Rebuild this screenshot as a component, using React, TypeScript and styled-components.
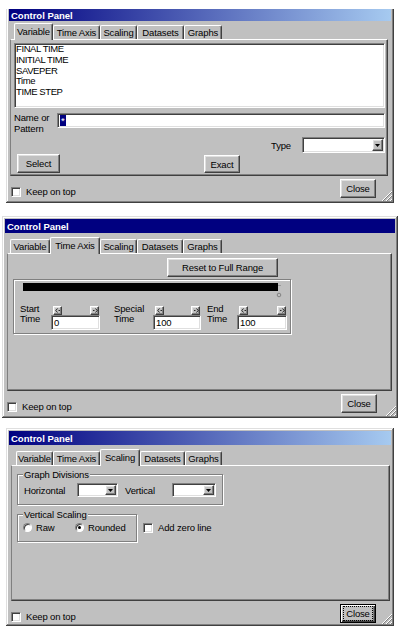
import React from "react";
import styled, { createGlobalStyle, css } from "styled-components";

const GlobalStyle = createGlobalStyle`
  html, body { margin: 0; padding: 0; background: #ffffff; }
  body { font-family: "Liberation Sans", Arial, Helvetica, sans-serif; font-size: 9.5px; letter-spacing: -0.15px; color: #000; }
  *, *::before, *::after { box-sizing: border-box; }
`;

const sunken = css`
  background: #ffffff;
  border: 1px solid;
  border-color: #808080 #ffffff #ffffff #808080;
  box-shadow: inset 1px 1px 0 #404040, inset -1px -1px 0 #dfdfdf;
`;

const raised = css`
  background: #c0c0c0;
  border: 1px solid;
  border-color: #ffffff #404040 #404040 #ffffff;
  box-shadow: inset -1px -1px 0 #808080, inset 1px 1px 0 #dfdfdf;
`;

const Screen = styled.div`
  width: 402px;
  height: 634px;
  overflow: hidden;
  display: flex;
  flex-direction: column;
`;

const Frame = styled.section<{ $left: number; $top: number; $width: number; $height: number; $cropTop?: boolean }>`
  position: relative;
  flex: none;
  margin-left: ${(p) => p.$left}px;
  margin-top: ${(p) => p.$top}px;
  width: ${(p) => p.$width}px;
  height: ${(p) => p.$height}px;
  padding: ${(p) => (p.$cropTop ? "0 3px 3px" : "3px")};
  background: #c0c0c0;
  display: flex;
  flex-direction: column;
  box-shadow: ${(p) =>
    p.$cropTop
      ? "inset -1px -1px 0 #404040, inset 1px 0 0 #dfdfdf, inset -2px -2px 0 #808080, inset 2px 0 0 #ffffff"
      : "inset -1px -1px 0 #404040, inset 1px 1px 0 #dfdfdf, inset -2px -2px 0 #808080, inset 2px 2px 0 #ffffff"};
`;

const TitleBar = styled.div<{ $h: number; $gradient: boolean }>`
  flex: none;
  height: ${(p) => p.$h}px;
  background: ${(p) => (p.$gradient ? "linear-gradient(to right, #000080, #a6caf0)" : "#000080")};
  color: #ffffff;
  font-weight: bold;
  font-size: 9.5px;
  letter-spacing: 0;
  display: flex;
  align-items: center;
  padding-left: 2px;
`;

const TabStrip = styled.div<{ $h: number; $offset: number }>`
  position: relative;
  z-index: 1;
  flex: none;
  height: ${(p) => p.$h}px;
  display: flex;
  align-items: flex-end;
  padding-left: ${(p) => p.$offset}px;
`;

const Tab = styled.div<{ $w: number; $active: boolean }>`
  width: ${(p) => p.$w}px;
  height: ${(p) => (p.$active ? 17 : 14)}px;
  margin-bottom: ${(p) => (p.$active ? -1 : 0)}px;
  background: #c0c0c0;
  border-top: 1px solid #ffffff;
  border-left: 1px solid #ffffff;
  border-right: 1px solid #404040;
  border-radius: 2px 2px 0 0;
  box-shadow: inset -1px 0 0 #808080;
  display: flex;
  justify-content: center;
  align-items: ${(p) => (p.$active ? "flex-start" : "center")};
  padding-top: ${(p) => (p.$active ? 2 : 0)}px;
  line-height: 11px;
  white-space: nowrap;
`;

const TabPage = styled.div<{ $h: number; $ml: number; $mr: number }>`
  flex: none;
  height: ${(p) => p.$h}px;
  margin: 0 ${(p) => p.$mr}px 0 ${(p) => p.$ml}px;
  border-top: 1px solid #ffffff;
  border-left: 1px solid #808080;
  border-right: 1px solid #404040;
  border-bottom: 1px solid #404040;
  box-shadow: inset -1px -1px 0 #808080;
  display: flex;
  flex-direction: column;
`;

const Footer = styled.div<{ $closeRight: number }>`
  flex: 1;
  display: flex;
  justify-content: space-between;
  align-items: flex-start;
  padding-right: ${(p) => p.$closeRight}px;
`;

const CheckLabel = styled.label`
  display: flex;
  align-items: center;
  gap: 5px;
  line-height: 11px;
  white-space: nowrap;
`;

const KeepOnTop = styled(CheckLabel)`
  margin: 10px 0 0 2px;
`;

const CheckBox = styled.span`
  ${sunken};
  flex: none;
  width: 10px;
  height: 10px;
`;

const Button = styled.button<{ $w: number; $h: number; $focused?: boolean }>`
  ${raised};
  flex: none;
  width: ${(p) => p.$w}px;
  height: ${(p) => p.$h}px;
  padding: 0;
  font: inherit;
  letter-spacing: inherit;
  color: #000;
  line-height: 11px;
  display: flex;
  align-items: center;
  justify-content: center;
  white-space: nowrap;
  ${(p) =>
    p.$focused &&
    css`
      border-color: #000;
      box-shadow: inset 1px 1px 0 #ffffff, inset -1px -1px 0 #404040, inset -2px -2px 0 #808080;
    `}
`;

const FocusRing = styled.span`
  border: 1px dotted #000;
  padding: 1px 2px;
`;

const CloseButton = styled(Button)`
  margin-top: 3px;
`;

const GripMark = styled.svg`
  position: absolute;
  right: 2px;
  bottom: 2px;
`;

/* ---------- Variable page ---------- */

const ListBox = styled.div`
  ${sunken};
  flex: none;
  height: 65px;
  margin: 3px 2px 0 3px;
  padding: 0 1px;
  line-height: 10.75px;
  letter-spacing: -0.4px;
`;

const NameRow = styled.div`
  display: flex;
  margin: 4px 2px 0 3px;
`;

const StackLabel = styled.div<{ $w: number; $lh: number }>`
  flex: none;
  width: ${(p) => p.$w}px;
  line-height: ${(p) => p.$lh}px;
  white-space: nowrap;
`;

const PatternField = styled.div`
  ${sunken};
  flex: 1;
  height: 15px;
  margin-top: 1px;
  padding: 0 2px;
  display: flex;
  align-items: center;
`;

const Selection = styled.span`
  background: #000080;
  color: #ffffff;
  line-height: 11px;
  padding: 0 1px;
`;

const TypeRow = styled.div`
  display: flex;
  justify-content: flex-end;
  align-items: center;
  gap: 11px;
  margin: 3px 2px 0 0;
`;

const ComboBox = styled.div<{ $w: number; $h: number }>`
  ${sunken};
  flex: none;
  width: ${(p) => p.$w}px;
  height: ${(p) => p.$h}px;
  padding: 1px;
  display: flex;
  justify-content: flex-end;
`;

const DropButton = styled.span`
  ${raised};
  width: 11px;
  height: 100%;
  display: flex;
  align-items: center;
  justify-content: center;
`;

const ActionRow = styled.div`
  display: flex;
  align-items: flex-start;
  margin: 1px 0 0 6px;
`;

const ExactButton = styled(Button)`
  margin: 1px 0 0 144px;
`;

/* ---------- Time Axis page ---------- */

const ResetButton = styled(Button)`
  margin: 4px 0 0 159px;
`;

const RangeFrame = styled.div`
  flex: none;
  width: 278px;
  height: 55px;
  margin: 2px 0 0 5px;
  border: 1px solid #808080;
  box-shadow: inset 1px 1px 0 #ffffff, 1px 1px 0 #ffffff;
  display: flex;
  flex-direction: column;
`;

const RangeBar = styled.div`
  position: relative;
  flex: none;
  width: 255px;
  height: 8px;
  margin: 3px 0 0 9px;
  background: #000;
`;

const RangeThumb = styled.svg`
  position: absolute;
  left: 253px;
  top: 1px;
`;

const TimeRow = styled.div`
  display: flex;
  margin: 13px 0 0 6px;
`;

const TimeGroup = styled.div<{ $ml: number }>`
  display: flex;
  margin-left: ${(p) => p.$ml}px;
`;

const TimeControls = styled.div<{ $w: number }>`
  width: ${(p) => p.$w}px;
  display: flex;
  flex-direction: column;
`;

const ArrowRow = styled.div`
  display: flex;
  justify-content: space-between;
  height: 9px;
  margin-top: 2px;
  padding: 0 1px 0 2px;
`;

const ArrowButton = styled.span`
  ${raised};
  width: 9px;
  height: 9px;
  display: flex;
  align-items: center;
  justify-content: center;
`;

const TimeField = styled.div`
  ${sunken};
  height: 15px;
  padding: 0 2px;
  display: flex;
  align-items: center;
`;

/* ---------- Scaling page ---------- */

const GroupBox = styled.div<{ $w: number; $mt: number }>`
  position: relative;
  flex: none;
  width: ${(p) => p.$w}px;
  margin-top: ${(p) => p.$mt}px;
  border: 1px solid #808080;
  box-shadow: inset 1px 1px 0 #ffffff, 1px 1px 0 #ffffff;
`;

const GroupLegend = styled.span`
  position: absolute;
  left: 5px;
  top: -6px;
  padding: 0 1px;
  background: #c0c0c0;
  line-height: 11px;
  white-space: nowrap;
`;

const DivisionsRow = styled.div`
  display: flex;
  align-items: center;
  padding: 8px 0 7px 6px;
`;

const InlineLabel = styled.span<{ $w: number; $ml?: number }>`
  flex: none;
  width: ${(p) => p.$w}px;
  margin-left: ${(p) => p.$ml ?? 0}px;
  white-space: nowrap;
`;

const ScalingSection = styled.div`
  display: flex;
  align-items: flex-start;
  margin-left: 5px;
`;

const DivisionsSection = styled.div`
  margin-left: 5px;
`;

const RadioRow = styled.div`
  display: flex;
  height: 11px;
  align-items: center;
  padding: 0 0 0 5px;
  margin: 7px 0 8px;
`;

const RadioItem = styled.label<{ $w?: number }>`
  display: flex;
  align-items: center;
  gap: 4px;
  width: ${(p) => (p.$w ? `${p.$w}px` : "auto")};
  white-space: nowrap;
`;

const Radio = styled.span<{ $checked?: boolean }>`
  flex: none;
  width: 9px;
  height: 9px;
  border-radius: 50%;
  background: #ffffff;
  border: 1px solid;
  border-color: #808080 #ffffff #ffffff #808080;
  box-shadow: inset 1px 1px 0 #404040;
  display: flex;
  align-items: center;
  justify-content: center;
  &::after {
    content: "";
    width: 3px;
    height: 3px;
    border-radius: 50%;
    background: ${(p) => (p.$checked ? "#000" : "transparent")};
  }
`;

const ZeroLine = styled(CheckLabel)`
  margin: 17px 0 0 6px;
`;

/* ---------- pieces ---------- */

const TABS = ["Variable", "Time Axis", "Scaling", "Datasets", "Graphs"];

function DownArrow() {
  return (
    <svg width="5" height="3" viewBox="0 0 5 3">
      <path d="M0 0 H5 L2.5 3 Z" fill="#000" />
    </svg>
  );
}

function Combo({ w, h }: { w: number; h: number }) {
  return (
    <ComboBox $w={w} $h={h}>
      <DropButton>
        <DownArrow />
      </DropButton>
    </ComboBox>
  );
}

function Arrow({ dir }: { dir: "left" | "right" }) {
  return (
    <svg width="6" height="5" viewBox="0 0 6 5">
      {dir === "left" ? (
        <path d="M2.5 0.5 L0.8 2.5 L2.5 4.5 M3.5 2.5 H5" stroke="#000" strokeWidth="0.8" fill="none" />
      ) : (
        <path d="M3.5 0.5 L5.2 2.5 L3.5 4.5 M1 2.5 H2.5" stroke="#000" strokeWidth="0.8" fill="none" />
      )}
    </svg>
  );
}

function Grip() {
  return (
    <GripMark width="11" height="11" viewBox="0 0 11 11">
      <path d="M11 1 L1 11 M11 5 L5 11 M11 9 L9 11" stroke="#ffffff" strokeWidth="1" />
      <path d="M11 2 L2 11 M11 6 L6 11 M11 10 L10 11" stroke="#808080" strokeWidth="1" />
    </GripMark>
  );
}

type WinProps = {
  left: number;
  top: number;
  width: number;
  height: number;
  cropTop?: boolean;
  gradient: boolean;
  titleH: number;
  stripH: number;
  tabOffset: number;
  tabWidths: number[];
  active: number;
  pageH: number;
  pageMl: number;
  pageMr: number;
  closeRight: number;
  focusedClose?: boolean;
  children?: React.ReactNode;
};

function ControlWindow(p: WinProps) {
  return (
    <Frame $left={p.left} $top={p.top} $width={p.width} $height={p.height} $cropTop={p.cropTop}>
      <TitleBar $h={p.titleH} $gradient={p.gradient}>Control Panel</TitleBar>
      <TabStrip $h={p.stripH} $offset={p.tabOffset}>
        {TABS.map((t, i) => (
          <Tab key={t} $w={p.tabWidths[i]} $active={i === p.active}>
            {t}
          </Tab>
        ))}
      </TabStrip>
      <TabPage $h={p.pageH} $ml={p.pageMl} $mr={p.pageMr}>
        {p.children}
      </TabPage>
      <Footer $closeRight={p.closeRight}>
        <KeepOnTop>
          <CheckBox />
          Keep on top
        </KeepOnTop>
        <CloseButton $w={36} $h={19} $focused={p.focusedClose}>
          {p.focusedClose ? <FocusRing>Close</FocusRing> : "Close"}
        </CloseButton>
      </Footer>
      <Grip />
    </Frame>
  );
}

const VARIABLES = ["FINAL TIME", "INITIAL TIME", "SAVEPER", "Time", "TIME STEP"];

const TIME_GROUPS = [
  { label: "Start", value: "0", ml: 0, lw: 31, cw: 49 },
  { label: "Special", value: "100", ml: 14, lw: 39, cw: 48 },
  { label: "End", value: "100", ml: 6, lw: 30, cw: 50 },
];

export default function App() {
  return (
    <Screen>
      <GlobalStyle />
      <ControlWindow
        left={6}
        top={9}
        width={388}
        height={194}
        cropTop
        gradient
        titleH={12}
        stripH={18}
        tabOffset={5}
        tabWidths={[39, 47, 37, 47, 38]}
        active={0}
        pageH={137}
        pageMl={1}
        pageMr={3}
        closeRight={15}
      >
        <ListBox>
          {VARIABLES.map((v) => (
            <div key={v}>{v}</div>
          ))}
        </ListBox>
        <NameRow>
          <StackLabel $w={43} $lh={11}>
            Name or
            <br />
            Pattern
          </StackLabel>
          <PatternField>
            <Selection>*</Selection>
          </PatternField>
        </NameRow>
        <TypeRow>
          <span>Type</span>
          <Combo w={83} h={16} />
        </TypeRow>
        <ActionRow>
          <Button $w={43} $h={19}>Select</Button>
          <ExactButton $w={36} $h={18}>Exact</ExactButton>
        </ActionRow>
      </ControlWindow>

      <ControlWindow
        left={2}
        top={13}
        width={396}
        height={202}
        gradient={false}
        titleH={14}
        stripH={20}
        tabOffset={5}
        tabWidths={[40, 50, 37, 46, 39]}
        active={1}
        pageH={138}
        pageMl={2}
        pageMr={3}
        closeRight={18}
      >
        <ResetButton $w={111} $h={19}>Reset to Full Range</ResetButton>
        <RangeFrame>
          <RangeBar>
            <RangeThumb width="6" height="14" viewBox="0 0 6 14">
              <path d="M2 1.5 H5" stroke="#9a9a9a" strokeWidth="1" />
              <circle cx="3" cy="11" r="1.8" fill="none" stroke="#7a7a7a" strokeWidth="0.9" />
            </RangeThumb>
          </RangeBar>
          <TimeRow>
            {TIME_GROUPS.map((g) => (
              <TimeGroup key={g.label} $ml={g.ml}>
                <StackLabel $w={g.lw} $lh={10}>
                  {g.label}
                  <br />
                  Time
                </StackLabel>
                <TimeControls $w={g.cw}>
                  <ArrowRow>
                    <ArrowButton>
                      <Arrow dir="left" />
                    </ArrowButton>
                    <ArrowButton>
                      <Arrow dir="right" />
                    </ArrowButton>
                  </ArrowRow>
                  <TimeField>{g.value}</TimeField>
                </TimeControls>
              </TimeGroup>
            ))}
          </TimeRow>
        </RangeFrame>
      </ControlWindow>

      <ControlWindow
        left={6}
        top={10}
        width={388}
        height={198}
        gradient
        titleH={14}
        stripH={20}
        tabOffset={7}
        tabWidths={[37, 47, 40, 45, 37]}
        active={2}
        pageH={136}
        pageMl={2}
        pageMr={1}
        closeRight={15}
        focusedClose
      >
        <DivisionsSection>
          <GroupBox $w={206} $mt={8}>
            <GroupLegend>Graph Divisions</GroupLegend>
            <DivisionsRow>
              <InlineLabel $w={53}>Horizontal</InlineLabel>
              <Combo w={41} h={14} />
              <InlineLabel $w={47} $ml={7}>
                Vertical
              </InlineLabel>
              <Combo w={44} h={14} />
            </DivisionsRow>
          </GroupBox>
        </DivisionsSection>
        <ScalingSection>
          <GroupBox $w={120} $mt={9}>
            <GroupLegend>Vertical Scaling</GroupLegend>
            <RadioRow>
              <RadioItem $w={52}>
                <Radio />
                Raw
              </RadioItem>
              <RadioItem>
                <Radio $checked />
                Rounded
              </RadioItem>
            </RadioRow>
          </GroupBox>
          <ZeroLine>
            <CheckBox />
            Add zero line
          </ZeroLine>
        </ScalingSection>
      </ControlWindow>
    </Screen>
  );
}
